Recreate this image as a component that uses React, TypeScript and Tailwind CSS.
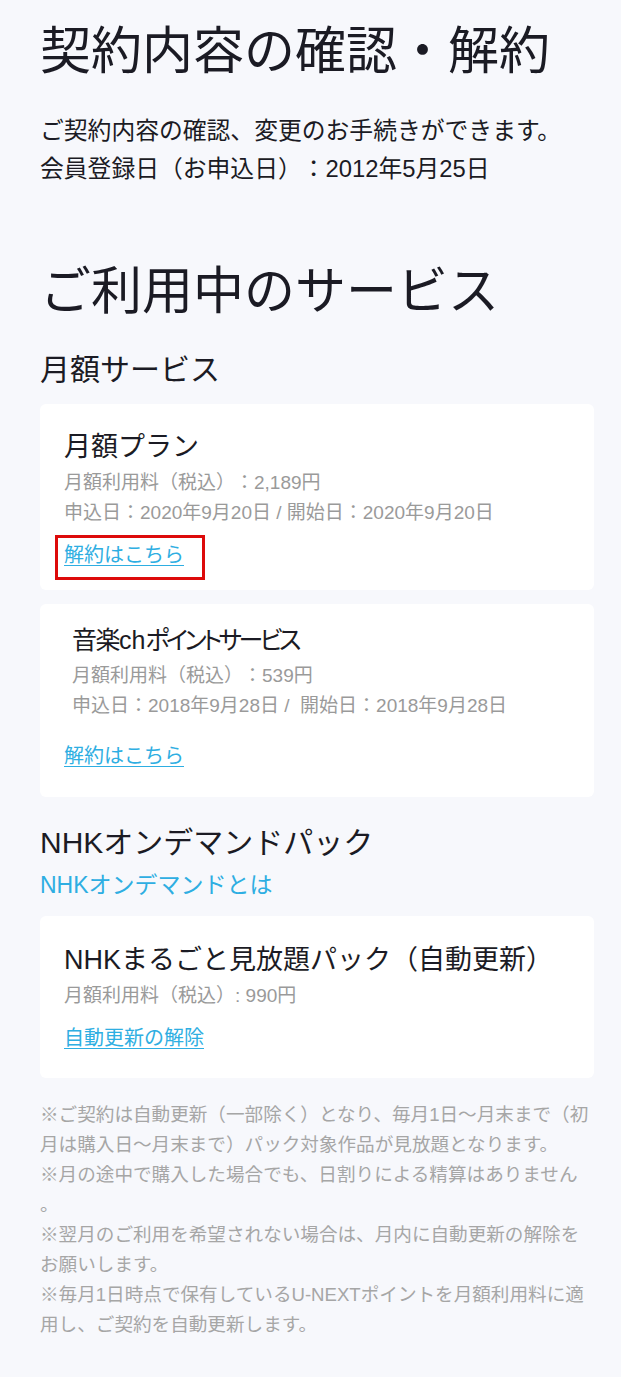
export default function App() {
  const font = { fontFamily: '"Liberation Sans", "Noto Sans CJK JP", "Noto Sans", sans-serif' };
  const gray = "text-[19px] leading-[30px] text-[#9a9a9a] whitespace-nowrap";
  const link = "text-[20px] leading-[30px] text-[#2eaee2] underline underline-offset-[3px] decoration-[1px]";

  return (
    <div className="min-h-[1377px] w-full bg-[#f7f8fc] text-[#1b1b24] [text-spacing-trim:space-all]" style={font}>
      <div className="pl-[40px] pr-[27px] pt-[22px] pb-[30px]">
        {/* Header */}
        <h1 className="text-[51px] leading-[60px] font-normal whitespace-nowrap">契約内容の確認・解約</h1>
        <div className="mt-[30px] text-[23.8px] leading-[38px] whitespace-nowrap">
          <p>ご契約内容の確認、変更のお手続きができます。</p>
          <p>会員登録日（お申込日）：2012年5月25日</p>
        </div>

        {/* Services */}
        <h2 className="mt-[74px] text-[51px] leading-[60px] font-normal whitespace-nowrap">ご利用中のサービス</h2>
        <h3 className="mt-[28px] text-[30px] leading-[40px] font-normal">月額サービス</h3>

        <div className="mt-[14px] rounded-[6px] bg-white pl-[24px] pt-[25px] pb-[20px]">
          <p className="text-[27px] leading-[36px]">月額プラン</p>
          <div className="mt-[3px]">
            <p className={gray}>月額利用料（税込）：2,189円</p>
            <p className={gray}>申込日：2020年9月20日 / 開始日：2020年9月20日</p>
          </div>
          <div className="mt-[7px] -mb-[10px] -ml-[9px] w-fit border-[3px] border-[#dd0a0a] pl-[6px] pr-[18px] pt-[2px] pb-[7px]">
            <a className={`block ${link}`}>解約はこちら</a>
          </div>
        </div>

        <div className="mt-[14px] rounded-[6px] bg-white pl-[24px] pt-[18px] pb-[26px]">
          <div className="pl-[8px]">
            <p className="text-[25px] leading-[36px] whitespace-nowrap [font-feature-settings:'palt']">
              <span className="tracking-[-1.5px]">音楽</span>
              <span className="tracking-[0px]">ch</span>
              <span className="tracking-[-3.6px]">ポイントサービス</span>
            </p>
            <div className="mt-[3px]">
              <p className={gray}>月額利用料（税込）：539円</p>
              <p className={gray}>申込日：2018年9月28日 /&nbsp;&nbsp;開始日：2018年9月28日</p>
            </div>
          </div>
          <div className="mt-[20px]">
            <a className={link}>解約はこちら</a>
          </div>
        </div>

        <h3 className="mt-[26px] text-[30px] leading-[40px] font-normal whitespace-nowrap">NHKオンデマンドパック</h3>
        <p className="mt-[7px] text-[23px] leading-[30px] text-[#2eaee2]">NHKオンデマンドとは</p>

        <div className="mt-[16px] rounded-[6px] bg-white pl-[24px] pt-[26px] pb-[25px]">
          <p className="text-[27px] leading-[36px] whitespace-nowrap">NHKまるごと見放題パック（自動更新）</p>
          <p className={`mt-[3px] ${gray}`}>月額利用料（税込）: 990円</p>
          <div className="mt-[12px]">
            <a className={link}>自動更新の解除</a>
          </div>
        </div>

        {/* Notes */}
        <div className="mt-[22px] text-[18.6px] leading-[30px] text-[#a6a6a6] whitespace-nowrap">
          <p>※ご契約は自動更新（一部除く）となり、毎月1日～月末まで（初</p>
          <p>月は購入日～月末まで）パック対象作品が見放題となります。</p>
          <p>※月の途中で購入した場合でも、日割りによる精算はありません</p>
          <p>。</p>
          <p>※翌月のご利用を希望されない場合は、月内に自動更新の解除を</p>
          <p>お願いします。</p>
          <p>※毎月1日時点で保有しているU-NEXTポイントを月額利用料に適</p>
          <p>用し、ご契約を自動更新します。</p>
        </div>
      </div>
    </div>
  );
}
